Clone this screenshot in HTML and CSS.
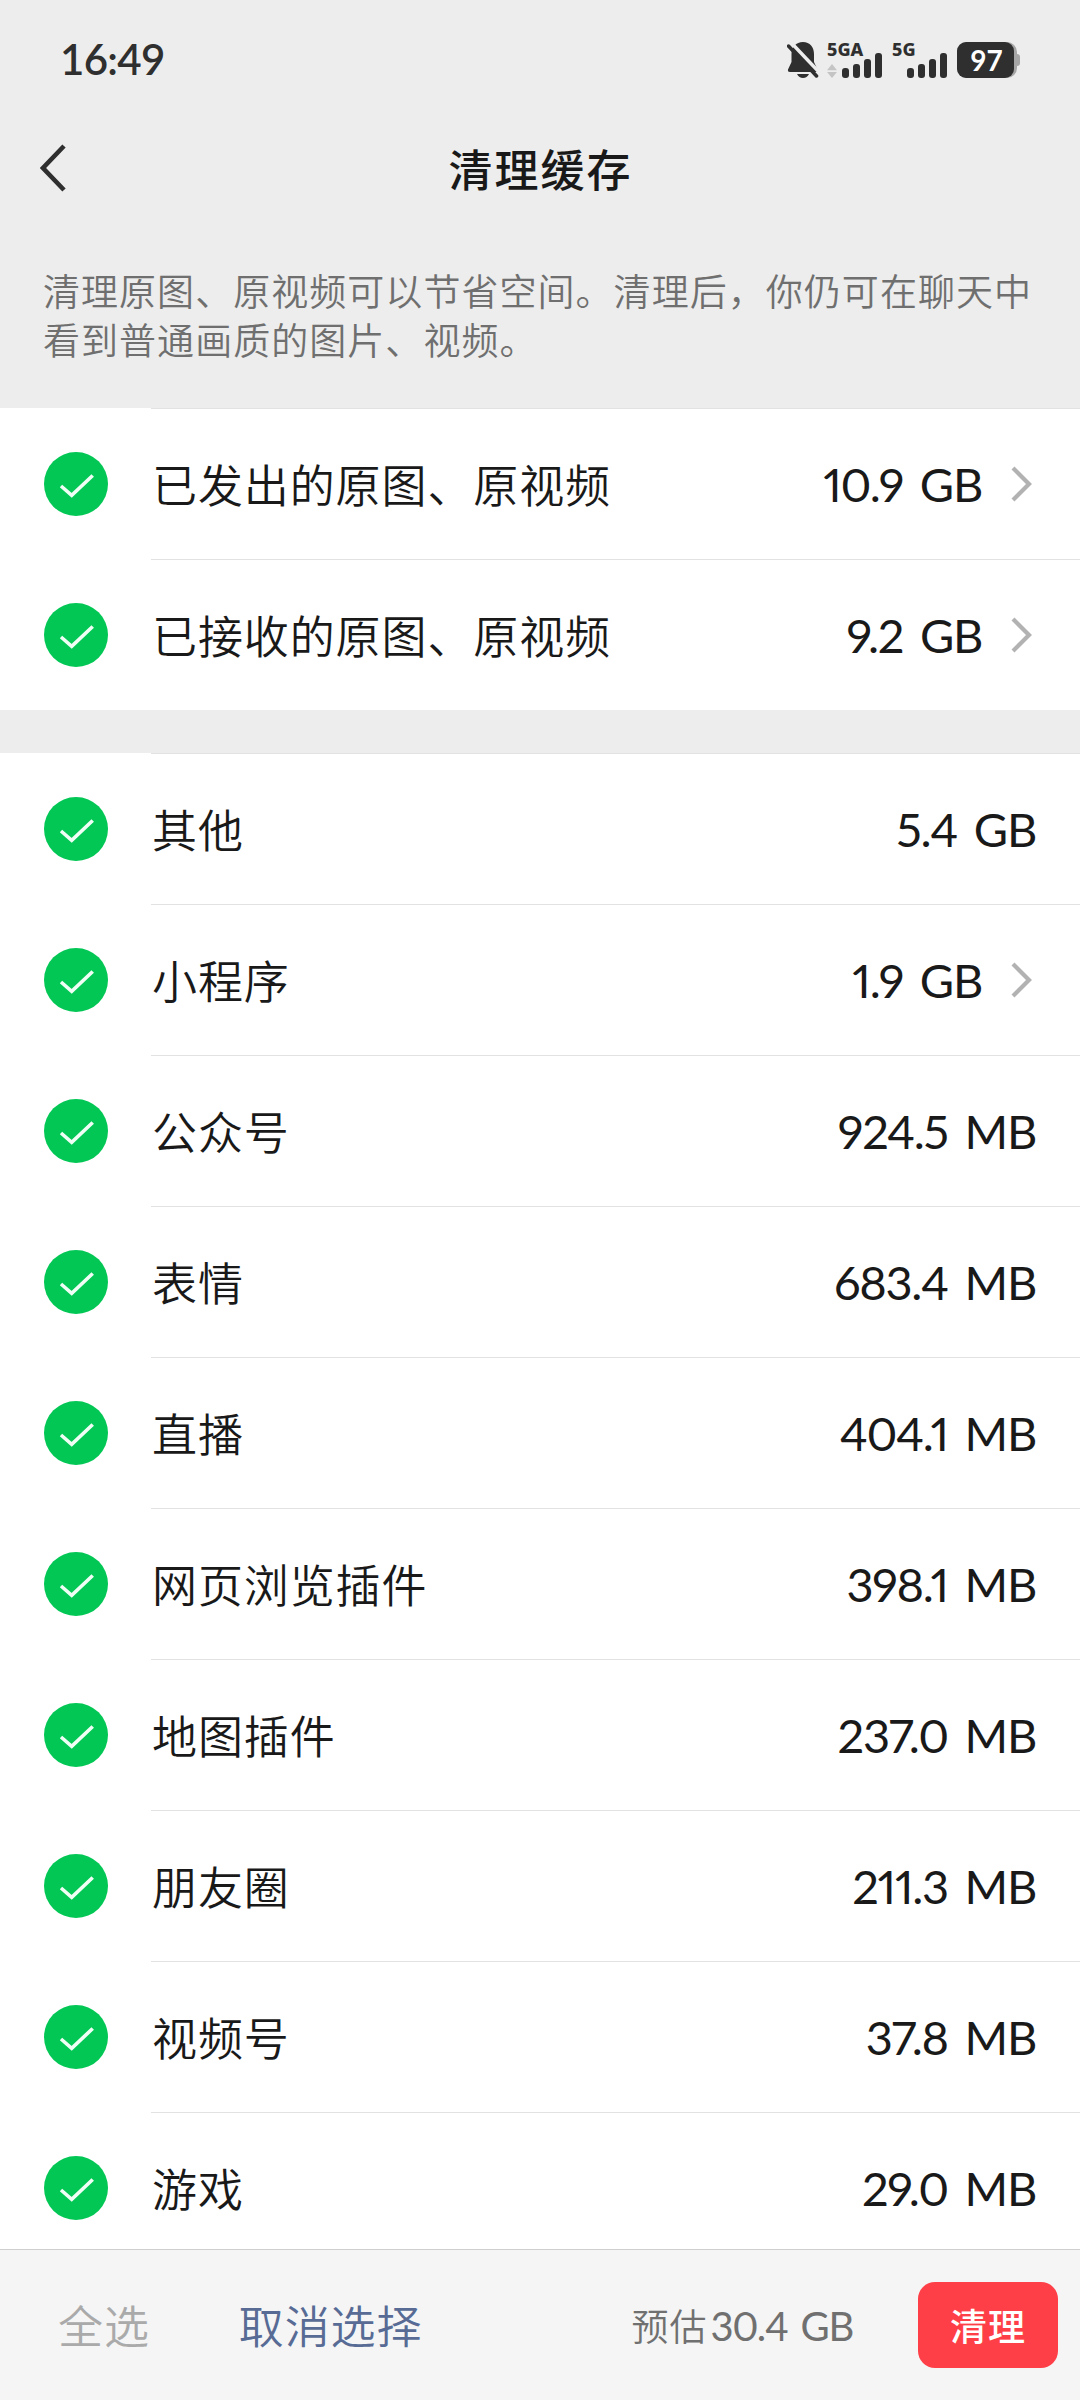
FILE: index.html
```
<!DOCTYPE html>
<html lang="zh-CN">
<head>
  <meta charset="UTF-8">
  <meta name="viewport" content="width=device-width, initial-scale=1.0">
  <title>清理缓存</title>
  <link rel="stylesheet" href="styles.css">
</head>
<body>
  <svg width="0" height="0" class="defs">
    <symbol id="check" viewBox="0 0 64 64">
      <circle cx="32" cy="32" r="32" fill="#03c755"/>
      <path d="M17 34 L27.7 43.3 L48.7 23.5" fill="none" stroke="#f0fff6" stroke-width="3.6"/>
    </symbol>
    <symbol id="arrow" viewBox="0 0 22 36">
      <path d="M2 2 L18 18 L2 34" fill="none" stroke="#b2b2b2" stroke-width="4.2"/>
    </symbol>
    <symbol id="signal" viewBox="0 0 40 25">
      <rect x="0" y="15" width="7" height="10" rx="3"/>
      <rect x="11" y="11" width="7" height="14" rx="3"/>
      <rect x="22" y="6" width="7" height="19" rx="3"/>
      <rect x="33" y="0" width="7" height="25" rx="3"/>
    </symbol>
  </svg>

  <div class="status-bar">
    <span class="time">16:49</span>
    <div class="status-icons">
      <svg class="bell" width="32" height="36" viewBox="0 0 32 36">
        <path d="M16 0 C9 0 4.500 5 4.500 12 V20 L1 27.500 Q0.500 30 3 30 H29 Q31.500 30 30.500 27.500 L27 20 V12 C27 5 23 0 16 0 Z" fill="#2f2f2f"/>
        <path d="M10 32 H22 Q20 36 16 36 Q12 36 10 32 Z" fill="#2f2f2f"/>
        <path d="M4 0.500 L33 31" stroke="#ededed" stroke-width="3.500"/>
        <path d="M1.500 4 L29.500 34" stroke="#2f2f2f" stroke-width="3.500" stroke-linecap="round"/>
      </svg>
      <div class="network network-a">
        <span class="network-name">5GA</span>
        <div class="network-row">
          <svg width="10" height="14" viewBox="0 0 10 14"><path d="M5 0 L10 6.200 H0 Z M0 8 H10 L5 14 Z" fill="#c4c4c4"/></svg>
          <svg class="signal" width="40" height="25"><use href="#signal"/></svg>
        </div>
      </div>
      <div class="network network-b">
        <span class="network-name">5G</span>
        <div class="network-row">
          <svg class="signal" width="40" height="25"><use href="#signal"/></svg>
        </div>
      </div>
      <div class="battery">
        <div class="battery-level">97</div>
      </div>
      <div class="battery-cap"></div>
    </div>
  </div>

  <div class="nav">
    <svg class="back" width="26" height="48" viewBox="0 0 26 48">
      <path d="M24 2 L3 24 L24 46" fill="none" stroke="#2f2f2f" stroke-width="4.600"/>
    </svg>
    <h1>清理缓存</h1>
  </div>

  <p class="tip">清理原图、原视频可以节省空间。清理后，你仍可在聊天中<br>看到普通画质的图片、视频。</p>

  <div class="list">
    <div class="item"><svg class="check"><use href="#check"/></svg><div class="cell"><span class="label">已发出的原图、原视频</span><span class="size">10.9 GB</span><svg class="arrow"><use href="#arrow"/></svg></div></div>
    <div class="item"><svg class="check"><use href="#check"/></svg><div class="cell"><span class="label">已接收的原图、原视频</span><span class="size">9.2 GB</span><svg class="arrow"><use href="#arrow"/></svg></div></div>
  </div>

  <div class="list list-more">
    <div class="item"><svg class="check"><use href="#check"/></svg><div class="cell"><span class="label">其他</span><span class="size">5.4 GB</span></div></div>
    <div class="item"><svg class="check"><use href="#check"/></svg><div class="cell"><span class="label">小程序</span><span class="size">1.9 GB</span><svg class="arrow"><use href="#arrow"/></svg></div></div>
    <div class="item"><svg class="check"><use href="#check"/></svg><div class="cell"><span class="label">公众号</span><span class="size">924.5 MB</span></div></div>
    <div class="item"><svg class="check"><use href="#check"/></svg><div class="cell"><span class="label">表情</span><span class="size">683.4 MB</span></div></div>
    <div class="item"><svg class="check"><use href="#check"/></svg><div class="cell"><span class="label">直播</span><span class="size">404.1 MB</span></div></div>
    <div class="item"><svg class="check"><use href="#check"/></svg><div class="cell"><span class="label">网页浏览插件</span><span class="size">398.1 MB</span></div></div>
    <div class="item"><svg class="check"><use href="#check"/></svg><div class="cell"><span class="label">地图插件</span><span class="size">237.0 MB</span></div></div>
    <div class="item"><svg class="check"><use href="#check"/></svg><div class="cell"><span class="label">朋友圈</span><span class="size">211.3 MB</span></div></div>
    <div class="item"><svg class="check"><use href="#check"/></svg><div class="cell"><span class="label">视频号</span><span class="size">37.8 MB</span></div></div>
    <div class="item"><svg class="check"><use href="#check"/></svg><div class="cell"><span class="label">游戏</span><span class="size">29.0 MB</span></div></div>
  </div>

  <div class="footer">
    <span class="select-all">全选</span>
    <span class="cancel">取消选择</span>
    <div class="total">预估<span class="total-size">30.4 GB</span></div>
    <button class="clean">清理</button>
  </div>
</body>
</html>
```
FILE: styles.css
```
* {
  box-sizing: border-box;
}
body {
  display: flex;
  flex-direction: column;
  width: 1080px;
  height: 2400px;
  margin: 0;
  overflow: hidden;
  background-color: #ededed;
  color: #191919;
  font-family: Lato, "Noto Sans CJK SC", sans-serif;
}
svg {
  display: block;
  flex: none;
}
.defs {
  position: absolute;
}
.status-bar {
  display: flex;
  flex: none;
  justify-content: space-between;
  height: 120px;
  padding: 41px 60px 0 60px;
  color: #2f2f2f;
}
.time {
  font-size: 42px;
  font-weight: 600;
  line-height: 36px;
  letter-spacing: -0.7px;
}
.status-icons {
  display: flex;
  height: 36px;
  margin-top: 1px;
}
.network {
  display: flex;
  flex-direction: column;
  justify-content: space-between;
}
.network-a {
  width: 55px;
  margin-left: 8px;
}
.network-b {
  width: 55px;
  margin-left: 10px;
}
.network-name {
  height: 11px;
  font-family: "Noto Sans", sans-serif;
  font-size: 18px;
  font-weight: 800;
  line-height: 14px;
}
.network-row {
  display: flex;
  align-items: flex-end;
  justify-content: flex-end;
  gap: 5px;
}
.signal {
  fill: #2f2f2f;
}
.battery {
  width: 60px;
  margin-left: 10px;
  border-radius: 10px;
  background-color: #a6a6a6;
}
.battery-level {
  width: 57px;
  height: 36px;
  padding-left: 2px;
  border-radius: 9px;
  background-color: #2f2f2f;
  color: #fff;
  font-size: 28px;
  font-weight: 700;
  line-height: 36px;
  text-align: center;
}
.battery-cap {
  width: 3px;
  height: 12px;
  margin-top: 12px;
  border-radius: 0 3px 3px 0;
  background-color: #a6a6a6;
}
.nav {
  display: grid;
  grid-template-columns: 26px 1fr 26px;
  flex: none;
  align-items: center;
  height: 96px;
  padding: 0 40px;
}
h1 {
  margin: 3px 0 0;
  font-size: 44px;
  font-weight: 500;
  line-height: 60px;
  letter-spacing: 2px;
  text-indent: 1px;
  text-align: center;
}
.tip {
  flex: none;
  height: 192px;
  margin: 0;
  padding: 51px 0 0 43px;
  color: #6f6f6f;
  font-size: 37px;
  font-weight: 350;
  line-height: 49px;
  letter-spacing: 1.04px;
  white-space: nowrap;
}
.list {
  flex: none;
  background-color: #fff;
}
.list-more {
  flex: 1;
  min-height: 0;
  margin-top: 43px;
  overflow: hidden;
}
.item {
  display: flex;
  align-items: center;
  height: 151px;
  padding-left: 44px;
}
.check {
  width: 64px;
  height: 64px;
  margin-right: 43px;
}
.cell {
  display: flex;
  flex: 1;
  align-items: center;
  height: 151px;
  padding-right: 44px;
  border-top: 1px solid #e2e2e2;
}
.label {
  flex: 1;
  padding: 0 0 2px 1px;
  font-size: 45px;
  font-weight: 350;
  letter-spacing: 0.9px;
}
.size {
  font-size: 47px;
  font-variant-numeric: proportional-nums;
  letter-spacing: -1.3px;
  word-spacing: 6px;
}
.arrow {
  width: 22px;
  height: 36px;
  margin: 0 3px 0 29px;
}
.footer {
  display: flex;
  flex: none;
  align-items: center;
  height: 151px;
  padding: 0 22px 0 58px;
  border-top: 1px solid #cfcfcf;
  background-color: #f5f5f5;
  font-size: 45px;
  font-weight: 350;
  letter-spacing: 0.9px;
}
.select-all,
.cancel {
  padding-bottom: 2px;
}
.select-all {
  color: #aaa;
}
.cancel {
  margin-left: 89px;
  color: #576b95;
}
.total {
  display: flex;
  align-items: baseline;
  margin-left: auto;
  color: #707070;
  font-size: 37px;
}
.total-size {
  margin-left: 3px;
  font-size: 40px;
  font-weight: 400;
  font-variant-numeric: proportional-nums;
  letter-spacing: -1.3px;
  word-spacing: 4px;
}
.clean {
  width: 140px;
  height: 86px;
  margin-left: 65px;
  padding: 0 0 1px;
  border: none;
  border-radius: 17px;
  background-color: #ff3f47;
  color: #fff;
  font-family: inherit;
  font-size: 37px;
  font-weight: 500;
  letter-spacing: 1px;
}
```
